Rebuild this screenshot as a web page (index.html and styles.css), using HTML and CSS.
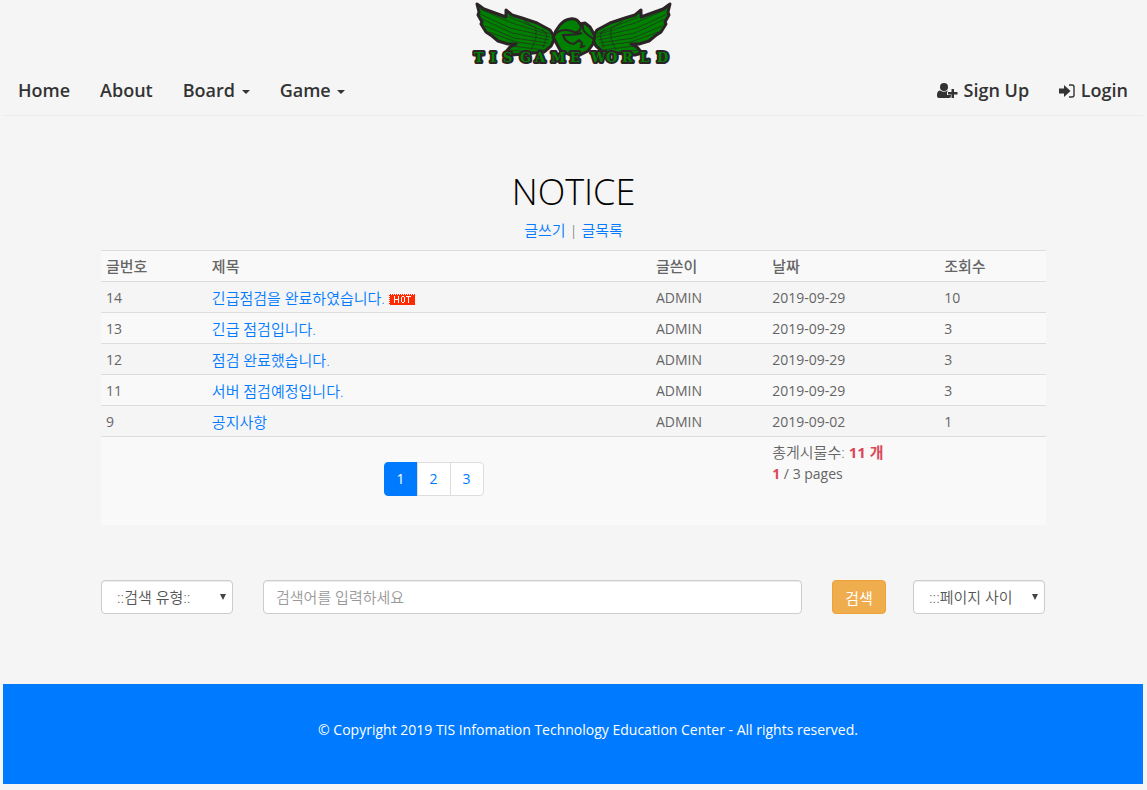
FILE: index.html
```html
<!DOCTYPE html>
<html lang="ko">
<head>
<meta charset="utf-8">
<meta name="viewport" content="width=device-width, initial-scale=1">
<title>TIS GAME WORLD - NOTICE</title>
<link rel="stylesheet" href="styles.css">
</head>
<body>
<header>
  <a class="brand" href="#">
    <svg class="logo" width="202" height="66" viewBox="0 0 202 66" role="img" aria-label="TIS GAME WORLD">
      <defs>
        <g id="wing">
          <path class="shape" d="M5 4 L12 9 34 17 34 10 40 15 50 18 65 23 78 30 83 38 79 46 72 52 40 55 33 53 38 47 44 44 36 44 26 41 20 36 14 32 9 24 10 22 6 15 7 12Z"/>
          <path class="feather" d="M8 9 L40 23 75 34 M8 14 L38 28 78 37 M10 19 L40 33 77 40 M13 26 L42 38 76 43 M17 32 L44 42 74 46 M40 46 L72 50 M37 17 L62 27 78 34 M36 50 L60 52 M52 21 L64 28 64 38 59 50 M70 29 L75 35 71 48"/>
        </g>
      </defs>
      <use href="#wing"/>
      <use href="#wing" transform="translate(203 0) scale(-1 1)"/>
      <path class="shape" d="M81 37 C84 29 90 20 98 19 C103 18 106 20 108 24 L113 23 118 27 123 36 121 44 116 51 108 55 98 55 88 50Z"/>
      <path class="line" d="M82 36 C86 29 95 29 102 32 C108 33 110 28 108 24 M90 35 C98 35 104 35 110 33 M91 35 Q93 43 102 44 L107 40 110 43 109 47 113 46 M111 25 Q110 31 116 35 T122 40"/>
      <text class="wordmark" y="62" x="2 18 31 48 63 79 98 119 134 150 168 185">TISGAMEWORLD</text>
    </svg>
  </a>
  <nav class="nav">
    <ul class="menu">
      <li><a href="#">Home</a></li>
      <li><a href="#">About</a></li>
      <li><a href="#">Board <span class="caret"></span></a></li>
      <li><a href="#">Game <span class="caret"></span></a></li>
    </ul>
    <ul class="menu">
      <li><a href="#"><svg class="icon" width="21" height="16" viewBox="0 0 21 16" aria-hidden="true"><circle cx="7" cy="4" r="4"/><path d="M3 7.500C0 8 0 11 0 13Q0 15 2 15H12Q14 15 14 13V12H10V8.500H11L10.500 7.500Q7 10 3 7.500Z"/><path d="M14.500 6H17V9H20.500V11.500H17V15H14.500V11.500H11V9H14.500Z"/></svg> Sign Up</a></li>
      <li><a href="#"><svg class="icon" width="16" height="16" viewBox="0 0 16 16" aria-hidden="true"><path d="M0 5.500H5V2L11.500 8 5 14V10.500H0Z"/><path d="M10 2H13Q15 2 15 4V12Q15 14 13 14H10" fill="none" stroke="currentColor" stroke-width="1.400"/></svg> Login</a></li>
    </ul>
  </nav>
</header>
<main class="container">
  <h1>NOTICE</h1>
  <p class="actions"><a href="#">글쓰기</a> | <a href="#">글목록</a></p>
  <table class="board">
    <colgroup><col class="c-no"><col class="c-title"><col class="c-writer"><col class="c-date"><col class="c-hits"></colgroup>
    <thead>
      <tr><th>글번호</th><th>제목</th><th>글쓴이</th><th>날짜</th><th>조회수</th></tr>
    </thead>
    <tbody>
      <tr><td>14</td><td><a href="#">긴급점검을 완료하였습니다.</a> <svg class="hot" width="26" height="11" viewBox="0 0 26 11" role="img" aria-label="HOT"><path d="M1 1H26V11H1Z" fill="#ff2a00"/><path d="M1 .5H26M.5 1V11" stroke="#ff2a00" stroke-dasharray="1 1"/><path d="M5.500 2V9M5.500 5.500H9M9.500 2V9M12.500 3V8M13 2.500H15M13 8.500H15M15.500 3V8M17 2.500H22M19.500 2V9" fill="none" stroke="#fff"/></svg></td><td>ADMIN</td><td>2019-09-29</td><td>10</td></tr>
      <tr><td>13</td><td><a href="#">긴급 점검입니다.</a></td><td>ADMIN</td><td>2019-09-29</td><td>3</td></tr>
      <tr><td>12</td><td><a href="#">점검 완료했습니다.</a></td><td>ADMIN</td><td>2019-09-29</td><td>3</td></tr>
      <tr><td>11</td><td><a href="#">서버 점검예정입니다.</a></td><td>ADMIN</td><td>2019-09-29</td><td>3</td></tr>
      <tr><td>9</td><td><a href="#">공지사항</a></td><td>ADMIN</td><td>2019-09-02</td><td>1</td></tr>
    </tbody>
    <tfoot>
      <tr>
        <td colspan="3">
          <ul class="pages">
            <li><a class="current" href="#">1</a></li>
            <li><a href="#">2</a></li>
            <li><a href="#">3</a></li>
          </ul>
        </td>
        <td colspan="2"><span class="ko">총게시물수: <b>11 개</b></span><br><b>1</b> / 3 pages</td>
      </tr>
    </tfoot>
  </table>
  <form class="search">
    <div class="select"><select class="field" aria-label="검색 유형"><option>::검색 유형::</option></select></div>
    <input class="field keyword" type="text" aria-label="검색어" placeholder="검색어를 입력하세요">
    <button class="submit" type="button">검색</button>
    <div class="select"><select class="field" aria-label="페이지 사이즈"><option>:::페이지 사이즈:::</option></select></div>
  </form>
</main>
<footer class="footer">© Copyright 2019 TIS Infomation Technology Education Center - All rights reserved.</footer>
</body>
</html>
```

FILE: styles.css
```css
* { box-sizing: border-box; }
body {
  margin: 0;
  padding: 0 4px 0 3px;
  background: #f5f5f5;
  color: #656565;
  font: 14px/21px "Open Sans", "Noto Sans CJK KR", sans-serif;
}
a { color: #007bff; text-decoration: none; }
.brand { display: block; height: 66px; }
.logo { display: block; margin: 0 auto; }
.shape { fill: #008000; stroke: #2b2326; stroke-width: 3; stroke-linejoin: round; }
.feather { fill: none; stroke: #2b2326; stroke-width: 1; opacity: .65; }
.line { fill: none; stroke: #2b2326; stroke-width: 2; }
.wordmark {
  font: bold 13px "DejaVu Serif", serif;
  fill: #008000;
  stroke: #2b2326;
  stroke-width: 4;
  stroke-linejoin: round;
  paint-order: stroke;
}
.nav {
  display: flex;
  justify-content: space-between;
  height: 50px;
  border-bottom: 1px solid #ececec;
}
.menu { display: flex; margin: 0; padding: 0; list-style: none; }
.menu a {
  display: block;
  padding: 12px 15px;
  color: #333;
  font-size: 18px;
  font-weight: 600;
  line-height: 25px;
}
.icon { margin-right: 1px; fill: currentColor; vertical-align: -2px; }
.caret {
  display: inline-block;
  margin-left: 2px;
  border: 4px solid transparent;
  border-top-color: currentColor;
  border-bottom: 0;
  vertical-align: middle;
}
.container { max-width: 1140px; margin: 0 auto; padding: 52px 97px 70px 98px; }
h1 {
  margin: 0;
  color: #000;
  font-size: 36px;
  font-weight: 300;
  line-height: 48px;
  text-align: center;
}
.actions { margin: 4px 0 9px; font-size: 15px; font-weight: 350; text-align: center; }
.board { width: 100%; table-layout: fixed; border-collapse: collapse; }
.c-no { width: 11.2%; }
.c-title { width: 47%; }
.c-writer { width: 12.3%; }
.c-date { width: 18.2%; }
.c-hits { width: 11.3%; }
.board th, .board td {
  padding: 5px;
  border-top: 1px solid #ddd;
  line-height: 20px;
  text-align: left;
  vertical-align: top;
}
.board tbody td { padding: 6px 5px 4px; }
.board th, .board td > a, .ko { font-size: 15px; }
.board td > a, .ko { font-weight: 350; }
.board td > a { display: inline-block; height: 20px; vertical-align: top; }
.board tfoot td { line-height: 21px; }
.board th { font-weight: 500; }
.board thead tr, .board tbody tr:nth-child(even), .board tfoot tr { background: #f9f9f9; }
.hot { vertical-align: -2px; }
.board b { color: #dc4858; font-weight: 700; }
.pages {
  display: flex;
  justify-content: center;
  margin: 20px 0 24px;
  padding: 0;
  list-style: none;
}
.pages a {
  display: block;
  margin-left: -1px;
  padding: 6px 12px;
  border: 1px solid #ddd;
  background: #fff;
  line-height: 20px;
}
.pages li:first-child a { border-radius: 4px 0 0 4px; }
.pages li:last-child a { border-radius: 0 4px 4px 0; }
.pages .current { border-color: #007bff; background: #007bff; color: #fff; }
.search { display: flex; margin-top: 55px; padding-right: 1px; }
.field {
  width: 132px;
  height: 34px;
  padding: 0 12px;
  border: 1px solid #ccc;
  border-radius: 4px;
  background: #fff;
  box-shadow: inset 0 1px 1px rgba(0, 0, 0, .075);
  color: #555;
  font: 350 15px "Open Sans", "Noto Sans CJK KR", sans-serif;
}
.select { position: relative; }
.select .field { padding: 0 31px 0 15px; appearance: none; }
.select::after {
  content: "";
  position: absolute;
  top: 14px;
  right: 7px;
  border: 3px solid transparent;
  border-top: 6px solid #444;
  border-bottom: 0;
}
.keyword { flex: 1; min-width: 0; margin: 0 30px; }
.keyword::placeholder { color: #999; }
.submit {
  width: 54px;
  height: 34px;
  margin-right: 27px;
  padding: 0;
  border: 1px solid #eea236;
  border-radius: 4px;
  background: #f0ad4e;
  color: #fff;
  font: 15px "Open Sans", "Noto Sans CJK KR", sans-serif;
}
.footer {
  padding: 36px 0 44px 30px;
  background: #007bff;
  color: #fff;
  line-height: 20px;
  text-align: center;
}
```
